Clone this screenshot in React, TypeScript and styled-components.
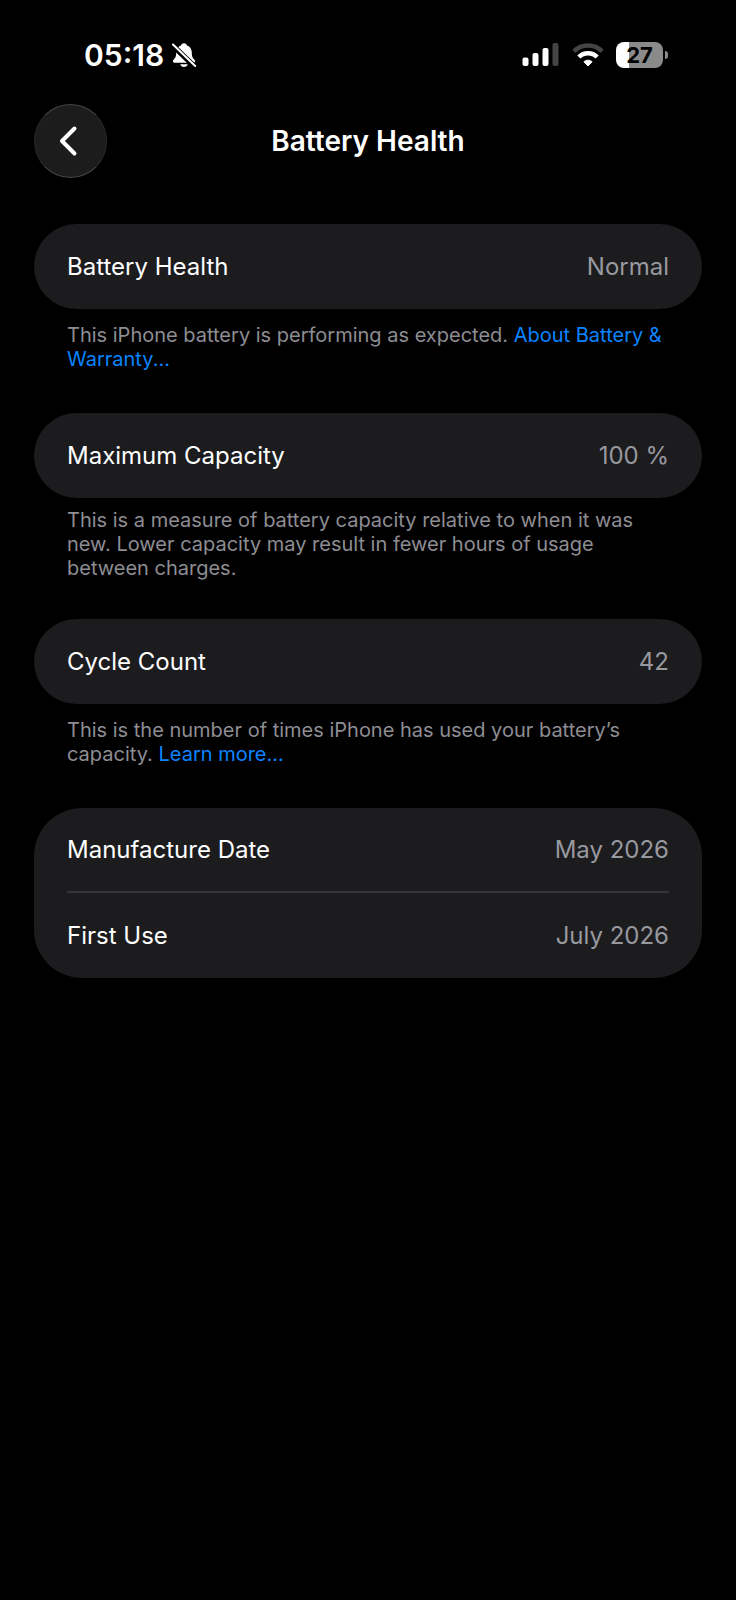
import React from "react";
import styled, { createGlobalStyle } from "styled-components";

const GlobalStyle = createGlobalStyle`
  * { box-sizing: border-box; }
  body {
    margin: 0;
    background: #000;
    color: #fff;
    font-family: Inter, "Liberation Sans", sans-serif;
  }
`;

const Screen = styled.div`
  min-height: 100vh;
  background: #000;
  padding: 37px 34px;
`;

const StatusBar = styled.div`
  display: flex;
  align-items: center;
  justify-content: space-between;
  height: 36px;
  padding: 0 34px 0 50px;
`;

const StatusGroup = styled.div<{ $gap: number }>`
  display: flex;
  align-items: center;
  gap: ${(p) => p.$gap}px;
`;

const Clock = styled.time`
  font-size: 30px;
  line-height: 36px;
  font-weight: 600;
`;

const Battery = styled.div`
  display: flex;
  align-items: center;
  gap: 2px;
`;

const BatteryBody = styled.div<{ $level: number }>`
  width: 47px;
  height: 26px;
  border-radius: 8px;
  background: linear-gradient(to right, #fff ${(p) => p.$level}%, #8a8a8a ${(p) => p.$level}%);
  color: #000;
  font-size: 22px;
  line-height: 26px;
  font-weight: 700;
  text-align: center;
`;

const BatteryTip = styled.div`
  width: 3px;
  height: 8px;
  border-radius: 0 4px 4px 0;
  background: #8a8a8a;
`;

const NavBar = styled.header`
  display: grid;
  grid-template-columns: 73px 1fr 73px;
  align-items: center;
  margin: 31px 0 46px;
`;

const BackButton = styled.button`
  display: flex;
  align-items: center;
  justify-content: center;
  height: 74px;
  padding: 0 4px 0 0;
  border: 1px solid #29292a;
  border-top-color: #454546;
  border-bottom-color: #454546;
  border-radius: 50%;
  background: #1c1c1d;
  cursor: pointer;
`;

const Title = styled.h1`
  margin: 0;
  font-size: 28px;
  line-height: 36px;
  font-weight: 600;
  text-align: center;
`;

const Sections = styled.main`
  display: flex;
  flex-direction: column;
  gap: 28px;
`;

const Card = styled.dl`
  margin: 0;
  padding: 0 33px;
  border-radius: 48px;
  background: #1c1c1e;
`;

const Row = styled.div`
  display: flex;
  align-items: center;
  justify-content: space-between;
  height: 85px;
  font-size: 24px;
  line-height: 32px;

  &:not(:last-child) {
    border-bottom: 2px solid #353538;
  }
`;

const Label = styled.dt`
  color: #fff;
`;

const Value = styled.dd`
  margin: 0;
  color: #98989f;
`;

const Note = styled.p<{ $compact?: boolean }>`
  margin: 0;
  padding: ${(p) => (p.$compact ? "10px 33px 11px" : "14px 33px")};
  color: #8d8d93;
  font-size: 20px;
  line-height: 24px;
`;

const Link = styled.a`
  color: #0a84ff;
  text-decoration: none;
`;

const BellOff = () => (
  <svg width="26" height="26" viewBox="0 0 26 26" aria-label="Silent mode">
    <path
      d="M13 1.2c-1.700 0-2.800 1-3 2.300C6.800 4.600 5.200 7.300 5.200 10.600c0 4-.8 5.300-2.600 7.200-1.300 1.400-.7 3 1 3h18.800c1.700 0 2.300-1.600 1-3-1.800-1.900-2.600-3.200-2.600-7.200 0-3.300-1.600-6-4.800-7.100-.2-1.300-1.300-2.300-3-2.300z"
      fill="#fff"
    />
    <path d="M9.300 22.300h7.400c-.4 1.700-1.800 2.700-3.700 2.700s-3.300-1-3.700-2.700z" fill="#fff" />
    <path d="M1 2.800 24.500 25.500" stroke="#000" strokeWidth="5.400" />
    <path d="M2 2.500 24.200 24" stroke="#fff" strokeWidth="2" strokeLinecap="round" />
  </svg>
);

const Signal = () => (
  <svg width="38" height="24" viewBox="0 0 38 24" aria-label="Signal: three of four bars">
    <rect x="0.500" y="14.500" width="6" height="8.500" rx="2" fill="#fff" />
    <rect x="10.500" y="10" width="6" height="13" rx="2" fill="#fff" />
    <rect x="20.500" y="5" width="6" height="18" rx="2" fill="#fff" />
    <rect x="30.500" y="0" width="6" height="23" rx="2" fill="#444" />
  </svg>
);

const Wifi = () => (
  <svg width="32" height="24" viewBox="0 0 32 24" aria-label="Wi-Fi">
    <g fill="none" strokeWidth="4.400">
      <path d="M1.800 8.300C9.700.5 22.300.5 30.200 8.300" stroke="#444" />
      <path d="M6.800 14c5.200-5.100 13.200-5.100 18.400 0" stroke="#fff" />
    </g>
    <path d="M16 23 11.800 18.800c2.400-2.100 6-2.100 8.400 0z" fill="#fff" stroke="#fff" strokeLinejoin="round" />
  </svg>
);

const Chevron = () => (
  <svg width="20" height="32" viewBox="0 0 20 32" aria-hidden="true">
    <path d="M15.500 3.500 3 16 15.500 28.500" fill="none" stroke="#fff" strokeWidth="4" strokeLinecap="round" strokeLinejoin="round" />
  </svg>
);

function Item({ label, value }: { label: string; value: string }) {
  return (
    <Row>
      <Label>{label}</Label>
      <Value>{value}</Value>
    </Row>
  );
}

export default function App() {
  return (
    <>
      <GlobalStyle />
      <Screen>
        <StatusBar>
          <StatusGroup $gap={7}>
            <Clock>05:18</Clock>
            <BellOff />
          </StatusGroup>
          <StatusGroup $gap={12}>
            <Signal />
            <Wifi />
            <Battery>
              <BatteryBody $level={27}>27</BatteryBody>
              <BatteryTip />
            </Battery>
          </StatusGroup>
        </StatusBar>
        <NavBar>
          <BackButton type="button" aria-label="Back">
            <Chevron />
          </BackButton>
          <Title>Battery Health</Title>
        </NavBar>
        <Sections>
          <section>
            <Card>
              <Item label="Battery Health" value="Normal" />
            </Card>
            <Note>
              This iPhone battery is performing as expected. <Link href="#warranty">About Battery &amp; Warranty...</Link>
            </Note>
          </section>
          <section>
            <Card>
              <Item label="Maximum Capacity" value="100 %" />
            </Card>
            <Note $compact>
              This is a measure of battery capacity relative to when it was new. Lower capacity may result in fewer
              hours of usage between charges.
            </Note>
          </section>
          <section>
            <Card>
              <Item label="Cycle Count" value="42" />
            </Card>
            <Note>
              This is the number of times iPhone has used your battery’s capacity. <Link href="#cycles">Learn more...</Link>
            </Note>
          </section>
          <Card>
            <Item label="Manufacture Date" value="May 2026" />
            <Item label="First Use" value="July 2026" />
          </Card>
        </Sections>
      </Screen>
    </>
  );
}
